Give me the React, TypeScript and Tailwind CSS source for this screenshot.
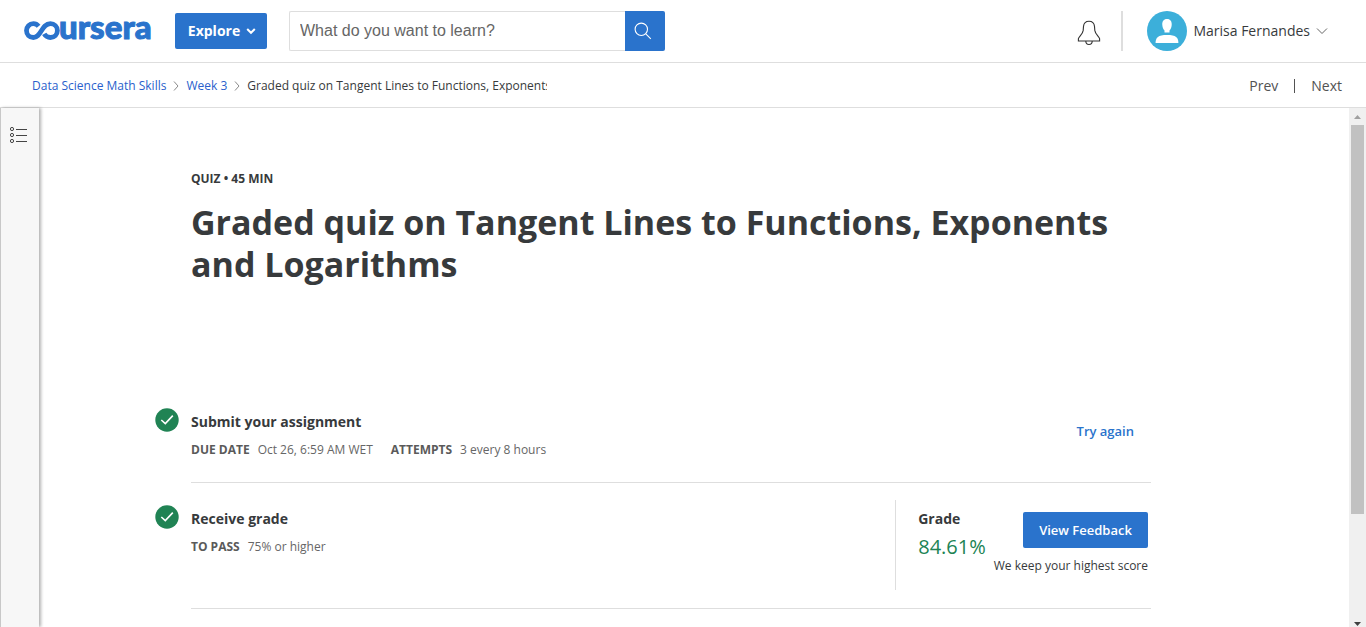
import type { ReactNode } from "react";

function Logo() {
  return (
    <a href="#" aria-label="Coursera" className="block shrink-0">
      <svg viewBox="0 -12 128 44" className="block h-11 w-32" aria-hidden="true">
        <g fill="none" stroke="#2a73cc" strokeWidth="4.8">
          <path d="M14.6 5.2C13.2 3.5 11.6 2.7 9.4 2.7C5.4 2.7 2.5 5.7 2.5 9.6S5.4 16.5 9.4 16.5C17.2 16.5 17.4 2.7 26.4 2.7C30.4 2.7 33.4 5.7 33.4 9.6S30.4 16.5 26.4 16.5C23.6 16.5 21.4 15 20.2 12.9" />
        </g>
        <text x="35" y="18" fill="#2a73cc" stroke="#2a73cc" strokeWidth="1" className="font-['Lato'] text-[33px] font-black">
          ursera
        </text>
      </svg>
    </a>
  );
}

function Crumb() {
  return (
    <svg viewBox="0 0 6 10" className="h-[10px] w-[6px] shrink-0" fill="none" stroke="#8a8a8a">
      <path d="M1 .5L5 5L1 9.5" />
    </svg>
  );
}

function Check() {
  return (
    <svg viewBox="0 0 24 24" className="h-6 w-6 shrink-0" role="img" aria-label="Completed">
      <circle cx="12" cy="12" r="11.7" fill="#208354" />
      <path d="M6.3 12L10.3 15.6L17.8 7.6" fill="none" stroke="#fff" strokeWidth="1.6" />
    </svg>
  );
}

function Fact({ label, children }: { label: string; children: ReactNode }) {
  return (
    <div className="flex gap-2">
      <dt className="font-bold text-[#5a5a5a]">{label}</dt>
      <dd className="text-[#666]">{children}</dd>
    </div>
  );
}

function Header() {
  return (
    <header className="flex h-[63px] shrink-0 items-center border-b border-[#dedede] pl-6 pr-[38px]">
      <Logo />
      <button className="ml-[23px] flex h-9 w-[92px] shrink-0 items-center justify-center gap-[6px] rounded-[2px] bg-[#2a73cc] pl-[2px] text-sm font-bold text-white">
        Explore
        <svg viewBox="0 0 10 8" className="h-2 w-[10px]" fill="none" stroke="#fff" strokeWidth="2">
          <path d="M1.2 2L5 5.8L8.8 2" />
        </svg>
      </button>
      <form className="ml-[22px] flex h-10 w-[376px]" onSubmit={(e) => e.preventDefault()}>
        <input
          type="text"
          aria-label="Search"
          placeholder="What do you want to learn?"
          className="min-w-0 flex-1 rounded-l-[2px] border border-r-0 border-[#dedede] px-[10px] font-['Liberation_Sans',sans-serif] text-base text-[#333] outline-none placeholder:text-[#666]"
        />
        <button aria-label="Submit search" className="flex w-10 items-center justify-center rounded-r-[2px] bg-[#2a73cc] pr-1">
          <svg viewBox="0 0 18 18" className="h-[18px] w-[18px]" fill="none" stroke="#fff" strokeWidth="1.1">
            <circle cx="7.3" cy="7.3" r="6.2" />
            <path d="M11.8 11.8L16.8 16.8" />
          </svg>
        </button>
      </form>
      <div className="ml-auto flex items-center">
        <button aria-label="Notifications">
          <svg viewBox="0 0 24 26" className="mt-1 h-[26px] w-6" fill="none" stroke="#333" strokeWidth="1.1">
            <path d="M12 1.3C8.6 1.3 6.8 3.4 6.5 6.4L6.2 10.4C5.8 14 2.2 16.4 1.4 18.6V21H22.6V18.6C21.8 16.4 18.2 14 17.8 10.4L17.5 6.4C17.2 3.4 15.400 1.3 12 1.3Z" />
            <path d="M8.8 21C8.8 25.6 15.2 25.6 15.2 21" />
          </svg>
        </button>
        <div className="ml-5 h-10 w-[2px] bg-[#dedede]" />
        <button className="ml-6 flex items-center text-sm text-[#373a3c]">
          <svg viewBox="0 0 40 40" className="h-10 w-10">
            <circle cx="20" cy="20" r="20" fill="#3cafda" />
            <path d="M20 8C16.6 8 15 10.6 15.3 14C15.500 16.500 16.300 18.300 17.500 19.400V21.500H22.500V19.400C23.700 18.300 24.500 16.500 24.700 14C25 10.6 23.4 8 20 8Z" fill="#fff" />
            <path d="M8.6 32C8.6 26.500 11 24 20 24S31.4 26.500 31.4 32Z" fill="#fff" />
          </svg>
          <span className="ml-[6px]">Marisa Fernandes</span>
          <svg viewBox="0 0 12 8" className="ml-[6px] h-2 w-3" fill="none" stroke="#666">
            <path d="M1 1.5L6 6.5L11 1.5" />
          </svg>
        </button>
      </div>
    </header>
  );
}

function Breadcrumbs() {
  return (
    <div className="flex h-[45px] shrink-0 items-center justify-between border-b border-[#dedede] pt-[2px] pl-8 pr-6">
      <nav aria-label="Breadcrumb" className="flex items-center gap-[7px] text-xs">
        <a href="#" className="text-[#2a5fcc]">Data Science Math Skills</a>
        <Crumb />
        <a href="#" className="text-[#2a5fcc]">Week 3</a>
        <Crumb />
        <span className="w-[300px] overflow-hidden whitespace-nowrap text-[#373a3c]">
          Graded quiz on Tangent Lines to Functions, Exponents
        </span>
      </nav>
      <div className="flex items-center gap-4 text-sm text-[#525252]">
        <a href="#">Prev</a>
        <div className="h-[14px] w-px bg-[#525252]" />
        <a href="#">Next</a>
      </div>
    </div>
  );
}

function Sidebar() {
  return (
    <aside className="z-10 w-[39px] shrink-0 border-l border-[#c8c8c8] bg-[#f7f7f7] pt-[18px] shadow-[2px_0_3px_rgba(0,0,0,0.3)]">
      <button aria-label="Open course outline" className="ml-2 block">
        <svg viewBox="0 0 20 18" className="h-[18px] w-5" fill="none" stroke="#444">
          <circle cx="3" cy="3" r="1.6" />
          <circle cx="3" cy="9" r="1.6" />
          <circle cx="3" cy="15" r="1.6" />
          <path d="M7 3.5H18M7 9.5H18M7 15.5H18" />
        </svg>
      </button>
    </aside>
  );
}

function Scrollbar() {
  return (
    <div aria-hidden="true" className="flex w-[17px] shrink-0 flex-col items-center bg-[#f0f0f0]">
      <svg viewBox="0 0 17 17" className="h-[17px] w-[17px] shrink-0">
        <path d="M5 11L8.500 7L12 11Z" fill="#a0a0a0" />
      </svg>
      <div className="w-[13px] flex-[389] bg-[#c1c1c1]" />
      <div className="flex-[96]" />
      <svg viewBox="0 0 17 17" className="h-[17px] w-[17px] shrink-0">
        <path d="M5 12L8.500 16L12 12Z" fill="#404040" />
      </svg>
    </div>
  );
}

export default function App() {
  return (
    <div className="flex h-screen flex-col overflow-hidden bg-white font-['Open_Sans',sans-serif] text-[#373a3c]">
      <Header />
      <Breadcrumbs />
      <div className="flex min-h-0 flex-1">
        <Sidebar />
        <main className="min-w-0 flex-1 overflow-hidden pl-10 pr-[86px]">
          <div className="mx-auto max-w-[960px] pt-[61px]">
            <p className="text-xs leading-5 font-bold">QUIZ • 45 MIN</p>
            <h1 className="mt-3 text-[34px] leading-[42px] font-bold">
              Graded quiz on Tangent Lines to Functions, Exponents and Logarithms
            </h1>

            <section className="mt-[123px] -ml-9 flex">
              <Check />
              <div className="ml-3 flex h-[75px] flex-1 justify-between border-b border-[#dedede]">
                <div className="pt-1">
                  <h2 className="text-sm leading-5 font-bold">Submit your assignment</h2>
                  <dl className="mt-2 flex gap-[18px] text-xs leading-5">
                    <Fact label="DUE DATE">Oct 26, 6:59 AM WET</Fact>
                    <Fact label="ATTEMPTS">3 every 8 hours</Fact>
                  </dl>
                </div>
                <a href="#" className="pt-[13px] pr-[17px] text-[13px] leading-5 font-semibold text-[#2a73cc]">
                  Try again
                </a>
              </div>
            </section>

            <section className="-ml-9 flex pt-[22px]">
              <Check />
              <div className="ml-3 flex h-[104px] flex-1 justify-between border-b border-[#dedede]">
                <div className="pt-1">
                  <h2 className="text-sm leading-5 font-bold">Receive grade</h2>
                  <dl className="mt-2 flex text-xs leading-5">
                    <Fact label="TO PASS">75% or higher</Fact>
                  </dl>
                </div>
                <div className="-mt-[5px] flex h-[90px] border-l border-[#dedede] pr-[3px] pl-[22px]">
                  <div className="pt-[9px]">
                    <h3 className="text-sm leading-5 font-bold">Grade</h3>
                    <p className="mt-1 text-xl leading-7 text-[#208354]">84.61%</p>
                  </div>
                  <div className="ml-2 flex flex-col items-end pt-3">
                    <button className="h-9 w-[125px] rounded-[2px] bg-[#2a73cc] pt-[2px] text-[13px] font-semibold text-white">
                      View Feedback
                    </button>
                    <p className="mt-2 text-xs leading-5">We keep your highest score</p>
                  </div>
                </div>
              </div>
            </section>
          </div>
        </main>
        <Scrollbar />
      </div>
    </div>
  );
}
